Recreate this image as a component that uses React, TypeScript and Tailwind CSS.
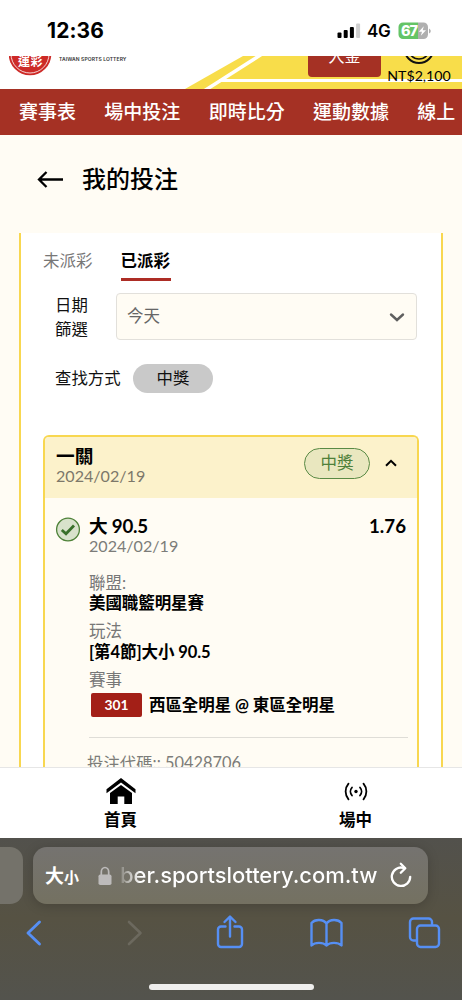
import { ReactNode } from "react"

const navItems = ["賽事表", "場中投注", "即時比分", "運動數據", "線上"]

function StatusBar() {
  return (
    <div className="flex h-[56px] shrink-0 items-start bg-white pl-[47px] pr-[31px] pt-[19px] font-['Inter'] text-black">
      <span className="text-[21px] leading-[24px] font-bold tracking-[0.1px]">12:36</span>

      <div className="ml-auto flex h-[24px] items-center">
        <svg width="24" height="16" viewBox="0 0 24 16">
          <rect x="0.5" y="9.5" width="4" height="5.5" rx="1" />
          <rect x="6.7" y="7" width="4" height="8" rx="1" />
          <rect x="12.9" y="4" width="4" height="11" rx="1" />
          <rect x="19.1" y="0.5" width="4" height="14.5" rx="1" fill="#cfcfcf" />
        </svg>
        <span className="ml-[6px] w-[24px] text-[17px] leading-[24px] font-semibold tracking-[-0.4px]">4G</span>
        <svg className="ml-[7px]" width="33" height="18" viewBox="0 0 33 18">
          <path d="M5 0.500h15v16.500H5a4.500 4.500 0 0 1-4.500-4.500V5A4.500 4.500 0 0 1 5 0.500z" fill="#65c466" />
          <path d="M20 0.500h5.500A4.500 4.500 0 0 1 30 5v7.500a4.500 4.500 0 0 1-4.500 4.500H20z" fill="#b0b0b0" />
          <path d="M31 6.500q1.800 1 1.800 2.500t-1.800 2.500z" fill="#b0b0b0" />
          <text x="3" y="14" fontSize="14.500" fontWeight="800" fill="#fff" textLength="17">67</text>
          <path d="M25.800 4.200L20.800 9.700h3.200L22.800 13.800L28 8.200h-3.300z" fill="#fff" />
        </svg>
      </div>
    </div>
  )
}

function LogoStrip() {
  return (
    <div className="relative flex h-[33px] shrink-0 items-start overflow-hidden bg-white">
      {/* COURT LINES */}
      <svg className="absolute inset-0" width="462" height="33" viewBox="0 0 462 33">
        <path d="M185 33L243 0H462V33z" fill="#f8dd4a" />
        <path d="M204 35L262 -2" stroke="#fff" strokeWidth="3.500" />
        <path d="M219 24.500H462" stroke="#fff" strokeWidth="3.200" />
        <path d="M231 17.500L221 24" stroke="#fff" strokeWidth="2" />
      </svg>

      {/* LOGO */}
      <svg className="relative ml-[9px]" width="43" height="20" viewBox="0 0 43 20">
        <circle cx="21" cy="-2" r="21.300" fill="#cd2a27" />
        <circle cx="21" cy="-2" r="19" fill="none" stroke="#fff" strokeWidth="0.800" />
        <text
          x="9"
          y="9.500"
          fontSize="12"
          fontWeight="700"
          fill="#fff"
          textLength="24.500"
          fontFamily="Noto Sans CJK TC, sans-serif"
        >
          運彩
        </text>
      </svg>
      <span className="relative ml-[7px] w-[70px] whitespace-nowrap font-['Inter'] text-[5px] leading-[7px] font-semibold tracking-[0.1px] text-[#333]">
        TAIWAN SPORTS LOTTERY
      </span>

      {/* DEPOSIT + BALANCE */}
      <button className="relative ml-[179px] h-[21px] w-[73px] rounded-b-[4px] bg-[#a53124] text-[16px] text-white">
        <span className="-mt-[21px] block leading-[20px]">入金</span>
      </button>
      <div className="relative ml-[5px] flex w-[66px] flex-col items-center">
        <svg width="32" height="9" viewBox="0 0 32 9" fill="none" stroke="#111">
          <circle cx="16" cy="-7.500" r="14.500" strokeWidth="2" />
          <circle cx="16" cy="-7.500" r="10.500" strokeWidth="1.600" />
        </svg>
        <span className="mt-[2px] text-[14.200px] leading-[18px] text-black">NT$2,100</span>
      </div>
    </div>
  )
}

function Field({ label, children }: { label: string; children: ReactNode }) {
  return (
    <div className="h-[48.500px] whitespace-nowrap text-[16.500px] leading-[20.500px]">
      <div className="text-[#777]">{label}</div>
      <div className="font-bold tracking-[-0.08px] text-black">{children}</div>
    </div>
  )
}

function BetCard() {
  return (
    <div className="mt-[42px] flex flex-1 flex-col rounded-t-[6px] border-2 border-b-0 border-[#f8d750] bg-[#fffcf4]">
      {/* CARD HEADER */}
      <div className="flex h-[60.500px] shrink-0 items-start rounded-t-[4px] bg-[#fcf2cb] pl-[11px] pr-[19px]">
        <div className="pt-[9.500px]">
          <div className="text-[18.700px] leading-[19px] font-bold text-black">一關</div>
          <div className="text-[16.100px] leading-[20px] text-[#7d786a]">2024/02/19</div>
        </div>
        <span className="ml-auto mt-[11px] flex h-[31px] w-[66px] items-center justify-center rounded-full border border-[#5a8a45] bg-[#e9e7bf] text-[16.500px] text-[#4f803a]">
          中獎
        </span>
        <svg className="ml-[14px] mt-[20px]" width="14" height="12" viewBox="0 0 14 12" fill="none" stroke="#000" strokeWidth="2">
          <path d="M2 8.800L7 3.800L12 8.800" />
        </svg>
      </div>

      {/* SELECTION */}
      <div className="flex pl-[10px] pr-[9px] pt-[18.500px]">
        <svg className="mt-[1px] shrink-0" width="26" height="26" viewBox="0 0 26 26">
          <circle cx="13" cy="12.500" r="11.400" fill="#d8e2cb" stroke="#4e8238" strokeWidth="1.300" />
          <path d="M6.800 13L11 16.800L19 8.500" fill="none" stroke="#39702a" strokeWidth="2.800" />
        </svg>
        <div className="ml-[8px] flex-1">
          <div className="flex justify-between pr-[2px] text-[18.700px] leading-[20px] font-bold text-black">
            <span className="tracking-[-0.2px]">大 90.5</span>
            <span>1.76</span>
          </div>
          <div className="mb-[16.500px] text-[16.100px] leading-[20px] text-[#7c7c79]">2024/02/19</div>

          <Field label="聯盟:">美國職籃明星賽</Field>
          <Field label="玩法">[第4節]大小 90.5</Field>
          <Field label="賽事">
            <div className="flex h-[30px] items-center pl-[2px]">
              <span className="mr-[7px] flex h-[24px] w-[51px] items-center justify-center rounded-[2px] bg-[#a31f17] text-[13.800px] text-white">
                301
              </span>
              西區全明星 @ 東區全明星
            </div>
          </Field>

          <div className="mt-[19px] border-t border-[#dfddd7]" />
          <div className="-ml-[2px] mt-[14.500px] whitespace-nowrap text-[16.400px] leading-[20px] text-[#7c7c79]">
            投注代碼:: 50428706
          </div>
        </div>
      </div>
    </div>
  )
}

function BetsPanel() {
  return (
    <div className="ml-[19px] mr-[19px] flex h-[534px] shrink-0 flex-col overflow-hidden border-x-2 border-[#f8d750] bg-white px-[22px]">
      {/* TABS */}
      <div className="flex items-start pt-[16px] text-[16.500px] leading-[24px]">
        <button className="text-[#777]">未派彩</button>
        <button className="ml-[28px] w-[50px] border-b-[3px] border-[#ad2d25] pb-[5px] text-left font-bold text-black">
          已派彩
        </button>
      </div>

      {/* DATE FILTER */}
      <div className="mt-[12px] flex h-[47px] items-center pl-[12px]">
        <span className="w-[61px] text-[16.400px] leading-[24px] text-[#111]">
          日期
          <br />
          篩選
        </span>
        <div className="flex h-[47px] w-[301px] items-center justify-between rounded-[4px] border border-[#e2e0db] bg-[#fffcf4] pl-[10px] pr-[11px] text-[16.500px] text-[#666]">
          今天
          <svg width="16" height="12" viewBox="0 0 16 12" fill="none" stroke="#5f5f5f" strokeWidth="2.400" strokeLinecap="round">
            <path d="M2 3.500L8 9L14 3.500" />
          </svg>
        </div>
      </div>

      {/* SEARCH TYPE */}
      <div className="mt-[24px] flex h-[29px] items-center pl-[12px] text-[16.400px] text-[#111]">
        <span className="w-[78px]">查找方式</span>
        <span className="flex h-[29px] w-[80px] items-center justify-center rounded-full bg-[#c9c9c9]">中獎</span>
      </div>

      <BetCard />
    </div>
  )
}

function TabBar() {
  return (
    <div className="flex h-[71px] shrink-0 border-t border-[#e6e6e6] bg-white pl-[3px] text-[16.500px] leading-[20px] font-bold text-black">
      <div className="flex w-[235px] shrink-0 flex-col items-center pt-[10px]">
        <svg width="30" height="27" viewBox="0 0 30 27">
          <path d="M15 0L0.500 11.200V15.200L15 4.500L29.500 15.200V11.200z" />
          <path d="M15 7L4 15V26H11.700V18.500H18.300V26H26V15z" />
        </svg>
        <span className="mt-[5px]">首頁</span>
      </div>
      <div className="flex w-[235px] shrink-0 flex-col items-center pt-[13px]">
        <svg width="24" height="20" viewBox="0 0 24 20" fill="none" stroke="#000" strokeWidth="1.800" strokeLinecap="round">
          <circle cx="12" cy="10.500" r="1.700" fill="#000" stroke="none" />
          <path d="M8 6.500a6 6 0 0 0 0 8M16 6.500a6 6 0 0 1 0 8" />
          <path d="M4.500 2.700a12 12 0 0 0 0 15.600M19.500 2.700a12 12 0 0 1 0 15.600" />
        </svg>
        <span className="mt-[9px]">場中</span>
      </div>
    </div>
  )
}

function BrowserBar() {
  return (
    <div className="flex h-[162px] shrink-0 flex-col bg-linear-to-b from-[#52514c] via-[#565243] to-[#53534d] font-['Inter']">
      {/* ADDRESS */}
      <div className="flex h-[66px] items-end">
        <div className="h-[57px] w-[23px] rounded-r-[13px] bg-[#74726a]" />
        <div className="ml-[10px] flex h-[57px] w-[395px] items-center rounded-[14px] bg-linear-to-b from-[#757370] to-[#747161] pl-[12px] text-white shadow-[0_2px_12px_rgba(0,0,0,0.18)]">
          <div className="flex w-[53px] items-baseline font-['Noto_Sans_CJK_TC'] font-bold">
            <span className="text-[19px]">大</span>
            <span className="text-[15px]">小</span>
          </div>
          <svg width="14" height="20" viewBox="0 0 14 20">
            <path d="M3.300 10V6a3.700 4.500 0 0 1 7.400 0v4" fill="none" stroke="#bdbbbb" strokeWidth="1.700" />
            <rect x="0.500" y="8.500" width="13" height="10.500" rx="1.800" fill="#bdbbbb" />
          </svg>
          <span className="ml-[8px] w-[259px] whitespace-nowrap bg-linear-to-r from-white/15 via-white via-8% to-white bg-clip-text text-[22px] font-medium tracking-[-0.05px] text-transparent">
            ber.sportslottery.com.tw
          </span>
          <svg className="ml-[11px] -mt-[2px]" width="22" height="26" viewBox="0 0 22 26" fill="none" stroke="#fff" strokeWidth="2.300" strokeLinecap="round" strokeLinejoin="round">
            <path d="M13.500 5.900A9.200 9.200 0 1 0 20.200 14.800" />
            <path d="M10.800 1.800L15.300 6.200L10.800 10.800" />
          </svg>
        </div>
      </div>

      {/* TOOLBAR */}
      <div className="mt-[9px] flex h-[40px] items-center pl-[24px]">
        <svg width="20" height="28" viewBox="0 0 20 28" fill="none" stroke="#568ff4" strokeWidth="2.900" strokeLinecap="round" strokeLinejoin="round">
          <path d="M15.500 3L4 14L15.500 25" />
        </svg>
        <svg className="ml-[81px]" width="20" height="28" viewBox="0 0 20 28" fill="none" stroke="#6c695e" strokeWidth="2.600" strokeLinecap="round" strokeLinejoin="round">
          <path d="M4 3L15.500 14L4 25" />
        </svg>
        <svg className="ml-[70px] -mt-[2px]" width="30" height="36" viewBox="0 0 30 36" fill="none" stroke="#568ff4" strokeWidth="2.400" strokeLinecap="round" strokeLinejoin="round">
          <path d="M10.500 12.500H6a3 3 0 0 0-3 3V30a3 3 0 0 0 3 3h18a3 3 0 0 0 3-3V15.500a3 3 0 0 0-3-3h-4.500" />
          <path d="M15 22.500V3M9.500 8L15 2.500L20.500 8" />
        </svg>
        <svg className="ml-[64px]" width="35" height="30" viewBox="0 0 35 30" fill="none" stroke="#568ff4" strokeWidth="2.400" strokeLinecap="round" strokeLinejoin="round">
          <path d="M17.500 5.500C14 1 6 1 2.500 5V27.500C6 24 14 24 17.500 27.500C21 24 29 24 32.500 27.500V5C29 1 21 1 17.500 5.500zV27.500" />
        </svg>
        <svg className="ml-[63px]" width="34" height="34" viewBox="0 0 34 34" fill="none" stroke="#568ff4" strokeWidth="2.400" strokeLinejoin="round">
          <path d="M10 24.500H6.500a3.500 3.500 0 0 1-3.500-3.500V6A3.500 3.500 0 0 1 6.500 2.500h15A3.500 3.500 0 0 1 25 6v3.500" />
          <rect x="10" y="9.500" width="22" height="21.500" rx="3.500" />
        </svg>
      </div>

      <div className="mt-[31px] h-[6px] w-[165px] self-center rounded-full bg-[#efeeed]" />
    </div>
  )
}

export default function App() {
  return (
    <div className="flex h-[1000px] w-[462px] flex-col overflow-hidden bg-[#fffcf4] font-['Lato','Noto_Sans_CJK_TC',sans-serif]">
      <StatusBar />
      <LogoStrip />

      {/* NAV */}
      <nav className="flex h-[46px] shrink-0 items-center gap-[28.300px] whitespace-nowrap bg-[#a53124] pl-[19px] pt-[1px] text-[19px] font-medium text-white">
        {navItems.map((item) => (
          <span key={item} className="shrink-0">{item}</span>
        ))}
      </nav>

      {/* TITLE */}
      <div className="flex h-[98px] shrink-0 items-start pl-[37px] pt-[29px]">
        <svg className="mt-[6px]" width="27" height="20" viewBox="0 0 27 20" fill="none" stroke="#000" strokeWidth="2.300">
          <path d="M9.500 2L2 9.500L9.500 17M2 9.500H26" />
        </svg>
        <h1 className="ml-[18px] text-[24px] leading-[30px] font-medium text-black">我的投注</h1>
      </div>

      <BetsPanel />
      <TabBar />
      <BrowserBar />
    </div>
  )
}
